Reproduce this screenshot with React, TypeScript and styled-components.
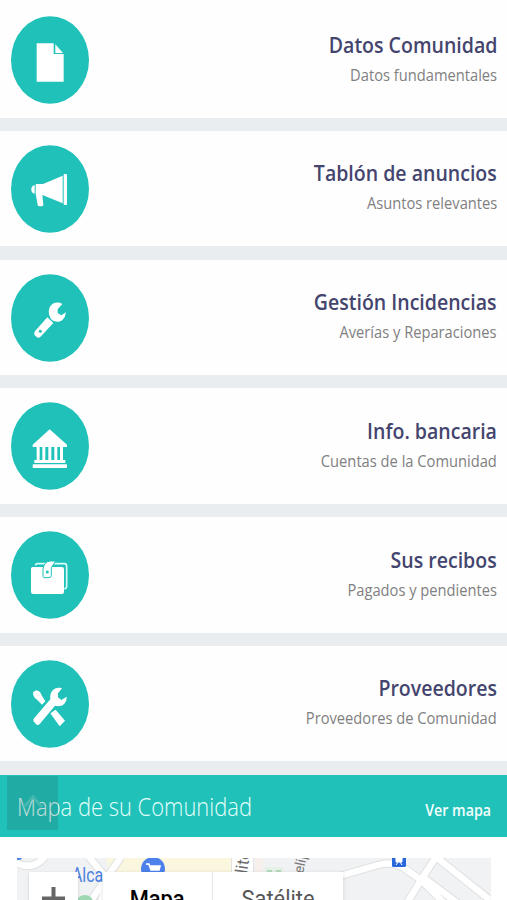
import React from "react";
import styled, { createGlobalStyle } from "styled-components";

const GlobalStyle = createGlobalStyle`
  * { box-sizing: border-box; }
  body {
    margin: 0;
    background: #fff;
    font-family: "Open Sans", "Noto Sans", sans-serif;
    overflow: hidden;
  }
`;

const Page = styled.main`
  width: 507px;
  height: 900px;
  overflow: hidden;
  padding-top: 2px;
`;

const Menu = styled.nav`
  display: flex;
  flex-direction: column;
  gap: 13.3px;
  padding-bottom: 13.3px;
  background: linear-gradient(#fff 0 10px, #e9edf0 10px);
`;

const Card = styled.a`
  height: 115.5px;
  display: flex;
  justify-content: space-between;
  align-items: flex-start;
  padding: 14px 10px 0 10.7px;
  background: #fefefe;
`;

const Disc = styled.svg`
  display: block;
  flex: none;
  width: 78px;
  height: 88px;
`;

const Labels = styled.div`
  display: flex;
  flex-direction: column;
  align-items: flex-end;
  padding-top: 12.5px;
`;

const Title = styled.span`
  font-size: 22.4px;
  line-height: 32px;
  font-weight: 600;
  color: #44456e;
  white-space: nowrap;
  transform: scaleX(0.872);
  transform-origin: right;
`;

const Subtitle = styled.span`
  font-size: 16.6px;
  line-height: 27px;
  color: #808080;
  white-space: nowrap;
  transform: scaleX(0.885);
  transform-origin: right;
`;

const MapBar = styled.header`
  position: relative;
  height: 62.5px;
  display: flex;
  justify-content: space-between;
  background: #1fc1b9;
  color: #fff;
  padding: 0 16px 0 17px;
`;

const MapTitle = styled.h2`
  margin: 0;
  padding-top: 13px;
  font-size: 25px;
  line-height: 36px;
  font-weight: 300;
  color: #e4fffb;
  white-space: nowrap;
  transform: scaleX(0.877);
  transform-origin: left;
`;

const MapLink = styled.a`
  padding-top: 23px;
  font-size: 16px;
  line-height: 24px;
  font-weight: 600;
  color: #f4fffd;
  white-space: nowrap;
  transform: scaleX(0.89);
  transform-origin: right;
`;

const ScrollTop = styled.button`
  position: absolute;
  left: 7px;
  top: 1px;
  width: 51px;
  height: 54px;
  padding: 0;
  border: 0;
  background: rgba(45, 85, 85, 0.2);
  svg { position: absolute; left: 15px; top: 17px; }
`;

const MapBox = styled.section`
  position: relative;
  margin: 20.5px 16px 0 17px;
  height: 50px;
  overflow: hidden;
  background: #f1f2f3;
`;

const MapArt = styled.svg`
  display: block;
  width: 474px;
  height: 50px;
`;

const ZoomIn = styled.button`
  position: absolute;
  left: 12px;
  top: 14px;
  width: 49px;
  height: 60px;
  display: flex;
  align-items: flex-start;
  padding: 15px 0 0 13px;
  border: 0;
  background: #fff;
  box-shadow: 0 1px 3px rgba(0, 0, 0, 0.14);
`;

const MapTypes = styled.div`
  position: absolute;
  left: 86px;
  top: 14px;
  width: 240px;
  height: 60px;
  display: flex;
  background: #fff;
  box-shadow: 0 1px 4px rgba(0, 0, 0, 0.14);
`;

const MapType = styled.span<{ $active?: boolean }>`
  width: ${(p) => (p.$active ? 111 : 131)}px;
  padding-top: 11px;
  border-right: ${(p) => (p.$active ? "1px solid #e6e6e6" : "0")};
  text-align: center;
  font: ${(p) => (p.$active ? 500 : 400)} 24px/32px Roboto, sans-serif;
  color: ${(p) => (p.$active ? "#000" : "#565656")};
  span { display: inline-block; transform: scaleX(0.91); }
`;

const teal = "#1fc1b9";

/* Each glyph is drawn inside a 234 x 264 window that starts at (33, top). */
const glyphs = {
  file: {
    top: 48,
    art: (
      <>
        <path d="M110 130H161V162H191V245H110Z" />
        <path d="M166 133L189 159H166Z" />
      </>
    ),
  },
  megaphone: {
    top: 44,
    art: (
      <>
        <path d="M104 165C91 165 90 190 104 190Z" />
        <path d="M107 161H129L188 136V219L127 194L130 224Q130 228 125 228H118Q114 228 113 224L107 190Z" />
        <rect x="191" y="131" width="10" height="93" rx="2" />
      </>
    ),
  },
  wrench: {
    top: 40,
    art: (
      <>
        <path d="M187 130C162 116 138 139 149 167C155 186 177 187 188 177Q196 170 198 155L184 164L173 157V146L187 130Z" />
        <path d="M142 170L160 187L123 227Q117 235 109 228Q98 220 106 210Z" />
        <circle cx="121" cy="212" r="4.5" fill={teal} />
      </>
    ),
  },
  bank: {
    top: 37,
    art: (
      <>
        <path d="M149 119L201 165V172H98V165Z" />
        <path d="M110 171H119V211H127V171H136V211H145V171H154V211H163V171H172V211H180V171H189V211H196V220H103V211H110Z" />
        <rect x="98" y="224" width="103" height="11" rx="2" />
      </>
    ),
  },
  wallet: {
    top: 48,
    art: (
      <>
        <path d="M106 151Q107 146 113 146H194Q200 146 200 154V214Q200 220 193 222" fill="none" stroke="#d6fffa" strokeWidth="5" />
        <path d="M98 156H186Q192 156 192 163V230Q192 237 184 237H100Q93 237 93 231V162Q93 156 98 156Z" />
        <path d="M129 184V163Q132 139 151 138L167 138L154 158V181Q154 188 147 188H135Q129 188 129 184Z" stroke={teal} strokeWidth="3" />
        <circle cx="142" cy="171" r="4.5" fill={teal} />
      </>
    ),
  },
  tools: {
    top: 45,
    art: (
      <>
        <path d="M99 142L108 136Q120 137 124 149L136 169L126 179L112 165Q99 158 99 142Z" />
        <path d="M151 205L167 194L195 227L179 244Z" />
        <path d="M186 130C167 124 148 136 151 163L103 219Q97 225 103 232L110 239Q116 242 121 235L165 182C181 187 201 179 200 155L184 165L174 157V145Z" />
      </>
    ),
  },
};

type GlyphName = keyof typeof glyphs;

const items: { glyph: GlyphName; title: string; sub: string }[] = [
  { glyph: "file", title: "Datos Comunidad", sub: "Datos fundamentales" },
  { glyph: "megaphone", title: "Tablón de anuncios", sub: "Asuntos relevantes" },
  { glyph: "wrench", title: "Gestión Incidencias", sub: "Averías y Reparaciones" },
  { glyph: "bank", title: "Info. bancaria", sub: "Cuentas de la Comunidad" },
  { glyph: "wallet", title: "Sus recibos", sub: "Pagados y pendientes" },
  { glyph: "tools", title: "Proveedores", sub: "Proveedores de Comunidad" },
];

function DiscIcon({ name }: { name: GlyphName }) {
  const { top, art } = glyphs[name];
  return (
    <Disc viewBox={`33 ${top} 234 264`} fill="#fff" aria-hidden="true">
      <ellipse cx="150" cy={top + 132} rx="117" ry="131.5" fill={teal} />
      {art}
    </Disc>
  );
}

const roads =
  "M17 863Q32 871 45 857M89 857L108 880L100 905M121 857L88 905" +
  "M340 876L378 865Q393 861 404 868L421 880L446 905M436 857L421 880L404 908M424 878L460 905M436 857L490 900";

function StreetMap() {
  return (
    <MapArt viewBox="17 858 474 50" aria-hidden="true">
      <path d="M106 858H231V880H112Z" fill="#fbf6de" />
      <path d="M255 858H263V880H255Z" fill="#f7efeb" />
      <g fill="none" strokeLinejoin="round">
        <path d={roads} stroke="#dfe1e3" strokeWidth="8.5" />
        <path d={roads} stroke="#fff" strokeWidth="6.5" />
      </g>
      <path d="M231 858H253V880H231Z" fill="#fff" />
      <path d="M231.5 858V880M253.5 858V880" stroke="#e3e3e3" />
      <circle cx="19" cy="857" r="3" fill="#4b82e8" />
      <ellipse cx="85" cy="902" rx="8" ry="7" fill="#9ed8b2" />
      <path d="M265 867H283V880H265Z" fill="#e6f2e8" />
      <path d="M267 870H272V874H267ZM276 870H281V874H276Z" fill="#b2dabb" />
      <circle cx="153" cy="869" r="12" fill="#4d82ec" />
      <path d="M146 864H149L151 870H159L160 866H150M152 873H159" fill="#fff" stroke="#fff" strokeWidth="1.6" />
      <rect x="392" y="854" width="14" height="13" rx="1.5" fill="#2968dc" />
      <path d="M396 856H402V862H396ZM396 865L398 862M402 865L400 862" fill="#fff" stroke="#fff" />
      <g fontFamily="Roboto, sans-serif">
        <text x="72" y="882" fontSize="20" fill="#4b80df" textLength="31" lengthAdjust="spacingAndGlyphs">Alca</text>
        <text transform="translate(247 874) rotate(-82)" fontSize="17" fill="#6d6d6d">lito</text>
        <text transform="translate(303 874) rotate(-78)" fontSize="14" fill="#777">elip</text>
      </g>
    </MapArt>
  );
}

export default function App() {
  return (
    <>
      <GlobalStyle />
      <Page>
        <Menu>
          {items.map((item) => (
            <Card key={item.title}>
              <DiscIcon name={item.glyph} />
              <Labels>
                <Title>{item.title}</Title>
                <Subtitle>{item.sub}</Subtitle>
              </Labels>
            </Card>
          ))}
        </Menu>
        <MapBar>
          <MapTitle>Mapa de su Comunidad</MapTitle>
          <MapLink>Ver mapa</MapLink>
          <ScrollTop aria-label="Subir">
            <svg width="22" height="18" fill="none" stroke="#45b8b0" strokeWidth="3">
              <path d="M2 14L11 4L20 14" />
            </svg>
          </ScrollTop>
        </MapBar>
        <MapBox>
          <StreetMap />
          <ZoomIn aria-label="Acercar">
            <svg width="23" height="23" fill="none" stroke="#666" strokeWidth="4">
              <path d="M11.5 0V23M0 11.5H23" />
            </svg>
          </ZoomIn>
          <MapTypes>
            <MapType $active><span>Mapa</span></MapType>
            <MapType><span>Satélite</span></MapType>
          </MapTypes>
        </MapBox>
      </Page>
    </>
  );
}
